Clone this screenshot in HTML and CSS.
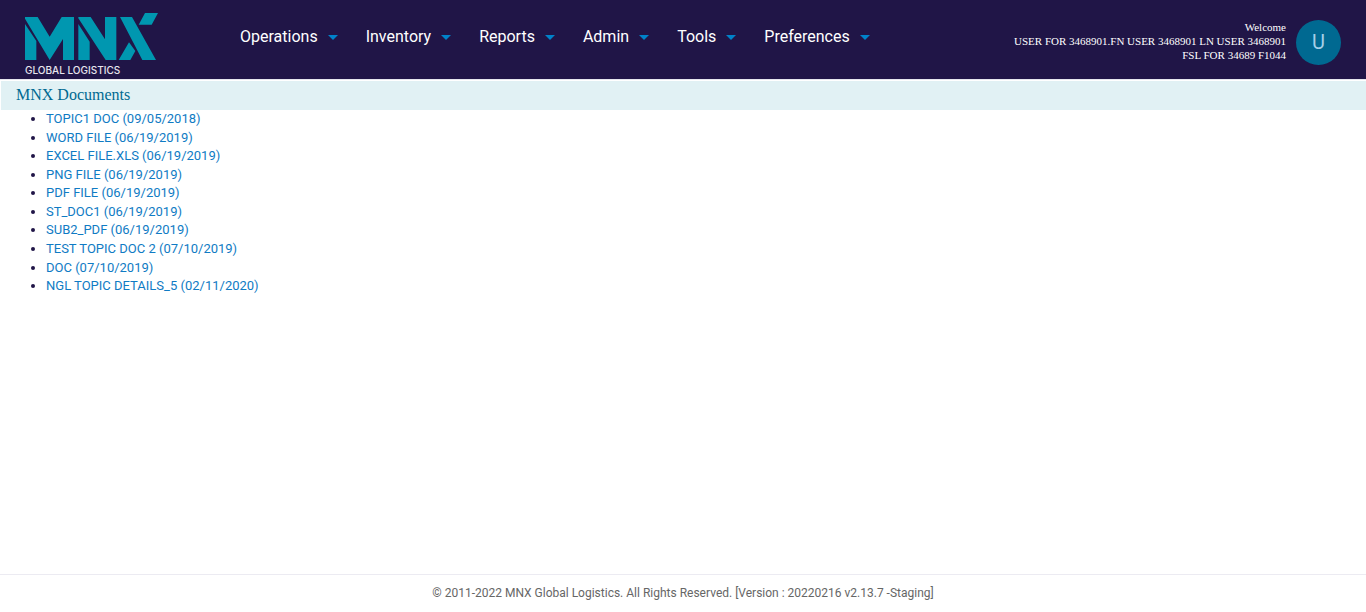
FILE: index.html
```html
<!DOCTYPE html>
<html lang="en">
<head>
<meta charset="utf-8">
<meta name="viewport" content="width=device-width, initial-scale=1">
<title>MNX Documents</title>
<link rel="stylesheet" href="styles.css">
</head>
<body>
<header class="topbar">
  <a class="logo" href="#" aria-label="MNX Global Logistics">
    <svg class="logo-mark" viewBox="75 39 399 141" aria-hidden="true">
      <path d="M75 72L109 123V180H75ZM75 51H113L149 110L185 51H222V180H189V117L149 180L75 56Z"/>
      <path d="M235 72L269 125V180H235ZM235 51H272L315 118V51H349V180H317L235 55Z"/>
      <path d="M360 51H396L468 180H427ZM435 39H474L455 74H416ZM387 127L406 153L391 180H356Z"/>
    </svg>
    <span class="logo-text">GLOBAL LOGISTICS</span>
  </a>
  <nav class="menu" aria-label="Main">
    <button class="menu-item" type="button">Operations</button>
    <button class="menu-item" type="button">Inventory</button>
    <button class="menu-item" type="button">Reports</button>
    <button class="menu-item" type="button">Admin</button>
    <button class="menu-item" type="button">Tools</button>
    <button class="menu-item" type="button">Preferences</button>
  </nav>
  <div class="user">
    <p class="user-info">Welcome<br>USER FOR 3468901.FN USER 3468901 LN USER 3468901<br>FSL FOR 34689 F1044</p>
    <button class="avatar" type="button">U</button>
  </div>
</header>
<main class="content">
  <h1 class="page-title">MNX Documents</h1>
  <ul class="documents">
    <li><a href="#">TOPIC1 DOC (09/05/2018)</a></li>
    <li><a href="#">WORD FILE (06/19/2019)</a></li>
    <li><a href="#">EXCEL FILE.XLS (06/19/2019)</a></li>
    <li><a href="#">PNG FILE (06/19/2019)</a></li>
    <li><a href="#">PDF FILE (06/19/2019)</a></li>
    <li><a href="#">ST_DOC1 (06/19/2019)</a></li>
    <li><a href="#">SUB2_PDF (06/19/2019)</a></li>
    <li><a href="#">TEST TOPIC DOC 2 (07/10/2019)</a></li>
    <li><a href="#">DOC (07/10/2019)</a></li>
    <li><a href="#">NGL TOPIC DETAILS_5 (02/11/2020)</a></li>
  </ul>
</main>
<footer class="footer">© 2011-2022 MNX Global Logistics. All Rights Reserved. [Version : 20220216 v2.13.7 -Staging]</footer>
</body>
</html>
```

FILE: styles.css
```css
* {
  box-sizing: border-box;
}

body {
  margin: 0;
  min-height: 100vh;
  display: flex;
  flex-direction: column;
  background: #fff;
  color: #201547;
  font-family: Roboto, "Liberation Sans", sans-serif;
  font-size: 13px;
  line-height: 1.43;
}

.topbar {
  display: flex;
  align-items: flex-start;
  padding: 0 25px;
  background: #201547;
  border-bottom: 1px solid #e6e6ee;
}

.logo {
  width: 215px;
  padding: 13px 0 3px;
  color: #e8e6ee;
  text-decoration: none;
}

.logo-mark {
  display: block;
  width: 133px;
  height: 47px;
  fill: #0097b0;
}

.logo-text {
  display: block;
  margin-top: 4px;
  font-family: Inter, sans-serif;
  font-size: 10px;
  font-weight: 500;
  line-height: 12px;
}

.menu {
  display: flex;
  gap: 28px;
  padding-top: 24px;
}

.menu-item {
  display: flex;
  align-items: center;
  gap: 10px;
  padding: 0;
  border: 0;
  background: none;
  color: #fff;
  font: 16px/26px Roboto, sans-serif;
  cursor: pointer;
}

.menu-item::after {
  content: "";
  margin-top: 1px;
  border: 5px solid transparent;
  border-top-color: #0082ca;
  border-bottom: 0;
}

.user {
  display: flex;
  align-items: flex-start;
  gap: 10px;
  margin-left: auto;
  padding-top: 20px;
}

.user-info {
  margin: 0;
  color: #fff;
  font: 11px/14px "Liberation Serif", serif;
  text-align: right;
}

.avatar {
  width: 45px;
  height: 45px;
  padding: 0;
  border: 0;
  border-radius: 50%;
  background: #006991;
  color: #a5cfe8;
  font: 20px/45px Roboto, sans-serif;
}

.content {
  flex: 1;
  padding: 1px 0 0 1px;
}

.page-title {
  margin: 0;
  padding: 3px 15px 4px;
  background: #e1f1f4;
  color: #006991;
  font: 16px/22px "Liberation Serif", serif;
}

.documents {
  margin: 0;
  padding-left: 45px;
}

.documents a {
  color: #0f7bc4;
  text-decoration: none;
}

.footer {
  padding: 9px 0 10px;
  border-top: 1px solid #ecebf2;
  color: #666;
  font-size: 12px;
  line-height: 18px;
  text-align: center;
}
```
